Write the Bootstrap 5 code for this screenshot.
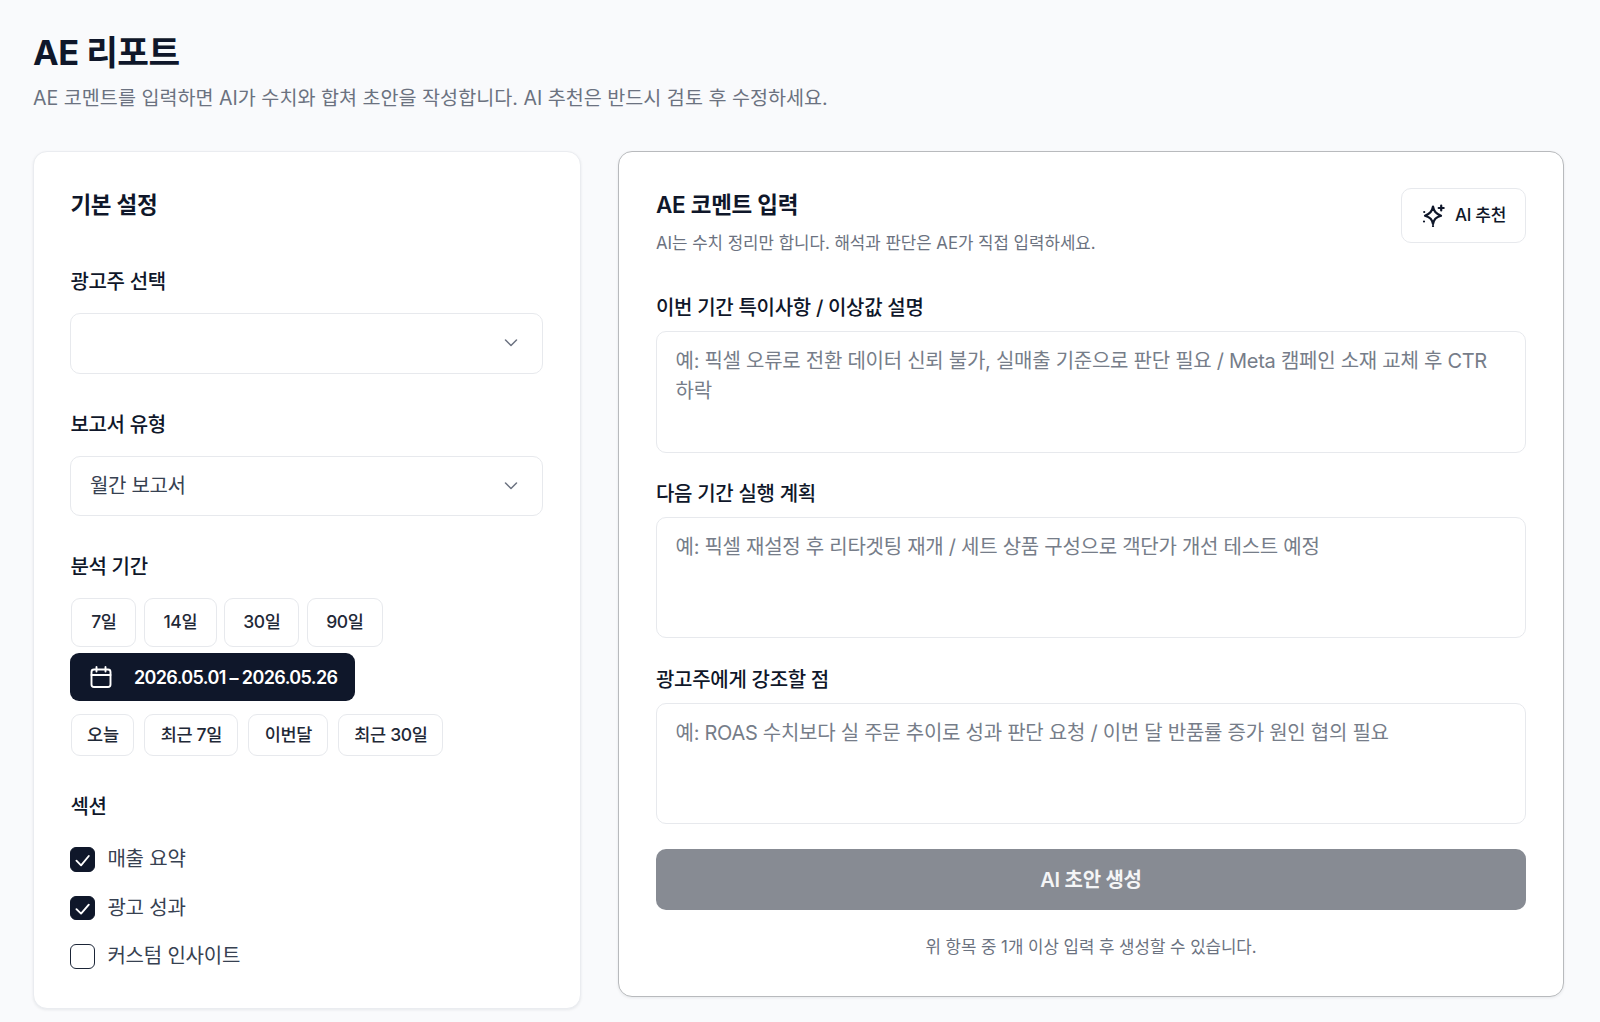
<!DOCTYPE html>
<html lang="ko">
<head>
<meta charset="utf-8">
<title>AE 리포트</title>
<link href="https://cdn.jsdelivr.net/npm/bootstrap@5.3.0/dist/css/bootstrap.min.css" rel="stylesheet">
<style>
html,body{background:#f9fafc;}
body{font-family:Inter,"Noto Sans CJK KR",sans-serif;color:#0f172a;height:1022px;overflow:hidden;}
.pg{padding:31px 36px 0 33px;}
.pg-title{font-size:34.4px;font-weight:700;line-height:44px;margin:0;letter-spacing:-.5px;}
.pg-sub{font-size:19.6px;line-height:28px;color:#6b7280;margin:9px 0 0;letter-spacing:0;}
.pg-cols{margin-top:39px;gap:36.5px;}
.pnl{background:#fff;border:1.5px solid #eaecf0;border-radius:14px;box-shadow:0 1px 3px rgba(15,23,42,.08);}
.pnl-l{width:548px;flex:none;padding:36px 37px 29px 36.4px;height:858px;}
.pnl-r{flex:1 1 0;min-width:0;padding:36px 37px 0 37.5px;height:846px;border-color:#b8babd;}
.h-sec{font-size:22.5px;font-weight:600;line-height:34px;margin:0;letter-spacing:-.3px;}
.lab{display:block;font-size:20px;font-weight:500;line-height:28px;margin:0;letter-spacing:-.3px;}
.sel.form-select{height:60.5px;border:1.5px solid #e7e9ed;border-radius:10px;font-size:20px;color:#374151;padding:0 48px 0 18.5px;letter-spacing:-.3px;box-shadow:none;
background-image:url("data:image/svg+xml,%3csvg xmlns='http://www.w3.org/2000/svg' viewBox='0 0 16 16'%3e%3cpath fill='none' stroke='%236b7280' stroke-linecap='round' stroke-linejoin='round' stroke-width='1.5' d='m2.5 5 5.5 5.5L13.5 5'/%3e%3c/svg%3e");background-size:16px 16px;background-position:right 23.5px center;}
.chip{border:1.5px solid #e7e9ed;background:#fff;border-radius:9px;color:#1f2937;font-weight:500;letter-spacing:-.3px;padding:0;display:flex;align-items:center;justify-content:center;}
.chip-a{height:49px;font-size:17.5px;}
.chip-b{height:42.5px;font-size:17.5px;}
.w65{width:65px}.w73{width:73px}.w75{width:75px}.w76{width:76px}.w63{width:63px}.w94{width:94px}.w80{width:80px}.w105{width:105px}
.row-a{gap:7.5px;margin:17px 0 0 1px;}
.row-b{gap:10px;margin:12.5px 0 0 1px;}
.rng{width:285px;height:48px;background:#0f172a;color:#fff;border-radius:9px;font-size:18px;font-weight:600;letter-spacing:-.62px;padding:0 18px 0 18.5px;gap:21px;border:0;margin-top:6px;white-space:nowrap;}
.rng:hover{background:#0f172a;color:#fff;}
.rng svg{flex:none;}
.chk-list{gap:24px;margin-top:26px;}
.chk{gap:12px;height:24.5px;margin:0;padding:0;min-height:0;}
.chk .form-check-input{width:24.5px;height:24.5px;margin:0;float:none;border:1.5px solid #1b2537;border-radius:6px;box-shadow:none;flex:none;}
.chk .form-check-input:checked{background-color:#0f172a;border-color:#0f172a;background-size:24px 24px;
background-image:url("data:image/svg+xml,%3csvg xmlns='http://www.w3.org/2000/svg' viewBox='0 0 24 24'%3e%3cpath fill='none' stroke='%23fff' stroke-linecap='round' stroke-linejoin='round' stroke-width='1.8' d='M6 13l4.5 4.5L18 8.5'/%3e%3c/svg%3e");}
.chk .form-check-label{font-size:20px;color:#374151;line-height:24.5px;letter-spacing:-.2px;margin-left:.5px;}
.sub-r{font-size:16.8px;line-height:24px;color:#6b7280;margin:9px 0 0;letter-spacing:-.02px;}
.ai-btn{width:125px;height:54.5px;border:1.5px solid #e7e9ed;background:#fff;border-radius:10px;color:#0f172a;font-size:17px;font-weight:500;gap:10px;padding:0;letter-spacing:-.25px;}
.tarea.form-control{height:121.5px;border:1.5px solid #e7e9ed;border-radius:10px;font-size:20px;line-height:30px;padding:14px 18.5px 12px;resize:none;letter-spacing:-.27px;box-shadow:none;color:#374151;margin-top:9px;word-break:keep-all;}
.tarea.form-control::placeholder{color:#767d89;opacity:1;}
.gen,.gen:disabled{height:61px;background:#878b93;border:0;border-radius:10px;color:#f4f5f6;font-size:20px;font-weight:600;letter-spacing:-.3px;opacity:1;margin-top:25px;}
.foot{font-size:16.8px;line-height:24px;color:#6b7280;letter-spacing:-.03px;margin:24.5px 0 0;}
.lab-first{margin-top:46px;}
.lab-next{margin-top:37px;}
.lab-sec{margin-top:37px;}
.lab-r1{margin-top:39px;}
.lab-r{margin-top:27px;}
.lab-r3{margin-top:27.5px;}
.sel-gap{margin-top:17px;}
</style>
</head>
<body>
<div class="pg">
  <h1 class="pg-title">AE 리포트</h1>
  <p class="pg-sub">AE 코멘트를 입력하면 AI가 수치와 합쳐 초안을 작성합니다. AI 추천은 반드시 검토 후 수정하세요.</p>
  <div class="d-flex align-items-start pg-cols">
    <section class="pnl pnl-l">
      <h2 class="h-sec">기본 설정</h2>
      <label class="lab lab-first">광고주 선택</label>
      <select class="form-select sel sel-gap" aria-label="광고주 선택"><option></option></select>
      <label class="lab lab-next">보고서 유형</label>
      <select class="form-select sel sel-gap" aria-label="보고서 유형"><option>월간 보고서</option></select>
      <label class="lab lab-next">분석 기간</label>
      <div class="d-flex row-a">
        <button class="btn chip chip-a w65">7일</button>
        <button class="btn chip chip-a w73">14일</button>
        <button class="btn chip chip-a w75">30일</button>
        <button class="btn chip chip-a w76">90일</button>
      </div>
      <button class="btn rng d-flex align-items-center">
        <svg width="24" height="24" viewBox="0 0 24 24" fill="none" stroke="#fff" stroke-width="1.9" stroke-linecap="round" stroke-linejoin="round"><rect x="2.5" y="4.5" width="19" height="17.5" rx="2.5"/><path d="M7.5 2v4.5M16.5 2v4.5M2.5 10h19"/></svg>
        <span>2026.05.01 – 2026.05.26</span>
      </button>
      <div class="d-flex row-b">
        <button class="btn chip chip-b w63">오늘</button>
        <button class="btn chip chip-b w94">최근 7일</button>
        <button class="btn chip chip-b w80">이번달</button>
        <button class="btn chip chip-b w105">최근 30일</button>
      </div>
      <label class="lab lab-sec">섹션</label>
      <div class="d-flex flex-column chk-list">
        <div class="form-check d-flex align-items-center chk"><input class="form-check-input" type="checkbox" checked id="c1"><label class="form-check-label" for="c1">매출 요약</label></div>
        <div class="form-check d-flex align-items-center chk"><input class="form-check-input" type="checkbox" checked id="c2"><label class="form-check-label" for="c2">광고 성과</label></div>
        <div class="form-check d-flex align-items-center chk"><input class="form-check-input" type="checkbox" id="c3"><label class="form-check-label" for="c3">커스텀 인사이트</label></div>
      </div>
    </section>
    <section class="pnl pnl-r">
      <div class="d-flex justify-content-between align-items-start">
        <div>
          <h2 class="h-sec">AE 코멘트 입력</h2>
          <p class="sub-r">AI는 수치 정리만 합니다. 해석과 판단은 AE가 직접 입력하세요.</p>
        </div>
        <button class="btn ai-btn d-flex align-items-center justify-content-center">
          <svg width="24" height="24" viewBox="0 0 24 24" fill="none" stroke="#0f172a" stroke-width="2.2" stroke-linecap="round" stroke-linejoin="round"><path d="M12 3.5c.9 4.8 2.6 6.9 8 9.2-5.4 1.6-7.1 3.6-8 8.3-.9-4.7-2.6-6.7-8-8.3 5.4-2.3 7.1-4.4 8-9.2z"/><path d="M20.2 2.5v5M17.7 5h5"/><path d="M3.2 9h.01M3 18.5h.01M12 23h.01"/></svg>
          <span>AI 추천</span>
        </button>
      </div>
      <label class="lab lab-r1">이번 기간 특이사항 / 이상값 설명</label>
      <textarea class="form-control tarea" placeholder="예: 픽셀 오류로 전환 데이터 신뢰 불가, 실매출 기준으로 판단 필요 / Meta 캠페인 소재 교체 후 CTR 하락"></textarea>
      <label class="lab lab-r">다음 기간 실행 계획</label>
      <textarea class="form-control tarea" placeholder="예: 픽셀 재설정 후 리타겟팅 재개 / 세트 상품 구성으로 객단가 개선 테스트 예정"></textarea>
      <label class="lab lab-r3">광고주에게 강조할 점</label>
      <textarea class="form-control tarea" placeholder="예: ROAS 수치보다 실 주문 추이로 성과 판단 요청 / 이번 달 반품률 증가 원인 협의 필요"></textarea>
      <button class="btn gen w-100" disabled>AI 초안 생성</button>
      <p class="foot text-center">위 항목 중 1개 이상 입력 후 생성할 수 있습니다.</p>
    </section>
  </div>
</div>
<script src="https://cdn.jsdelivr.net/npm/bootstrap@5.3.0/dist/js/bootstrap.bundle.min.js"></script>
</body>
</html>
